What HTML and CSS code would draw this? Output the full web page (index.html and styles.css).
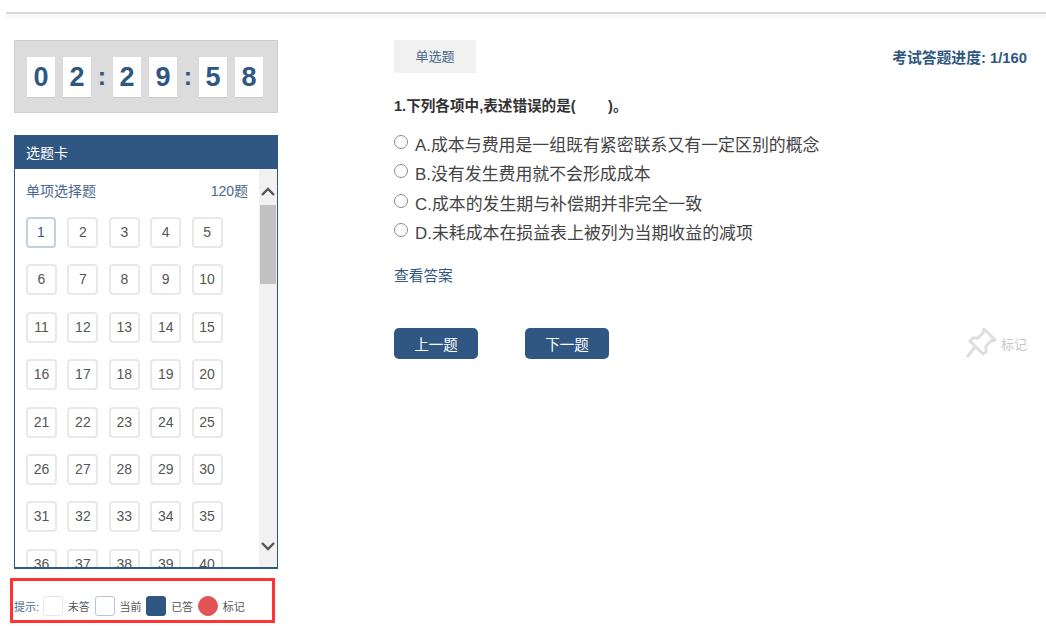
FILE: index.html
```html
<!DOCTYPE html>
<html lang="zh-CN">
<head>
    <meta charset="UTF-8">
    <meta name="viewport" content="width=device-width, initial-scale=1.0">
    <title>考试答题</title>
    <link rel="stylesheet" href="styles.css">
</head>
<body>
    <div class="topbar"></div>
    <div class="page">
        <div class="side">
            <div class="timer">
                <span class="digit">0</span><span class="digit">2</span><span class="colon">:</span>
                <span class="digit">2</span><span class="digit">9</span><span class="colon">:</span>
                <span class="digit">5</span><span class="digit">8</span>
            </div>

            <div class="card">
                <div class="card-title">选题卡</div>
                <div class="card-body">
                    <div class="card-list">
                        <div class="list-head"><span>单项选择题</span><span>120题</span></div>
                        <div class="cells">
                            <a class="cell current">1</a><a class="cell">2</a><a class="cell">3</a><a class="cell">4</a><a class="cell">5</a>
                            <a class="cell">6</a><a class="cell">7</a><a class="cell">8</a><a class="cell">9</a><a class="cell">10</a>
                            <a class="cell">11</a><a class="cell">12</a><a class="cell">13</a><a class="cell">14</a><a class="cell">15</a>
                            <a class="cell">16</a><a class="cell">17</a><a class="cell">18</a><a class="cell">19</a><a class="cell">20</a>
                            <a class="cell">21</a><a class="cell">22</a><a class="cell">23</a><a class="cell">24</a><a class="cell">25</a>
                            <a class="cell">26</a><a class="cell">27</a><a class="cell">28</a><a class="cell">29</a><a class="cell">30</a>
                            <a class="cell">31</a><a class="cell">32</a><a class="cell">33</a><a class="cell">34</a><a class="cell">35</a>
                            <a class="cell">36</a><a class="cell">37</a><a class="cell">38</a><a class="cell">39</a><a class="cell">40</a>
                        </div>
                    </div>
                    <div class="scrollbar">
                        <svg class="arrow" width="18" height="18" viewBox="0 0 18 18"><path d="M3 12 L9 6 L15 12" fill="none" stroke="#555" stroke-width="2.4"/></svg>
                        <div class="thumb"></div>
                        <div class="track"></div>
                        <svg class="arrow" width="18" height="18" viewBox="0 0 18 18"><path d="M3 6 L9 12 L15 6" fill="none" stroke="#555" stroke-width="2.4"/></svg>
                    </div>
                </div>
            </div>

            <div class="legend">
                <span class="legend-title">提示:</span>
                <span class="swatch"></span><span class="legend-text">未答</span>
                <span class="swatch now"></span><span class="legend-text">当前</span>
                <span class="swatch done"></span><span class="legend-text">已答</span>
                <span class="swatch mark"></span><span class="legend-text">标记</span>
            </div>
        </div>

        <div class="main">
            <div class="main-head">
                <span class="tag">单选题</span>
                <span class="progress">考试答题进度: 1/160</span>
            </div>
            <p class="question">1.下列各项中,表述错误的是(&nbsp;&nbsp;&nbsp;&nbsp;&nbsp;&nbsp;&nbsp;&nbsp;)。</p>
            <label class="option"><span class="radio"></span>A.成本与费用是一组既有紧密联系又有一定区别的概念</label>
            <label class="option"><span class="radio"></span>B.没有发生费用就不会形成成本</label>
            <label class="option"><span class="radio"></span>C.成本的发生期与补偿期并非完全一致</label>
            <label class="option"><span class="radio"></span>D.未耗成本在损益表上被列为当期收益的减项</label>
            <a class="answer">查看答案</a>
            <div class="actions">
                <button class="btn">上一题</button>
                <button class="btn">下一题</button>
                <span class="pin">
                    <svg width="32" height="32" viewBox="0 0 32 32"><path d="M19 2 L30 13 L26 14 L21 19 L21 25 L18 27 L5 14 L8 11 L13 11 L18 6 Z M10 20 L2 30" fill="none" stroke="#dedede" stroke-width="3" stroke-linejoin="round"/></svg>
                    标记
                </span>
            </div>
        </div>
    </div>
</body>
</html>
```

FILE: styles.css
```css
body {
    margin: 0;
    padding: 12px 0 0 6px;
    height: 642px;
    box-sizing: border-box;
    overflow: hidden;
    background-color: #fff;
    color: #444;
    font-family: "Liberation Sans", "Noto Sans CJK SC", sans-serif;
}
.topbar {
    height: 6px;
    border-top: 2px solid #d8d8d8;
    background-color: #f8f8f8;
    box-sizing: border-box;
}
.page {
    display: flex;
    padding: 22px 19px 0 8px;
}

/* left column */
.side {
    width: 264px;
    flex: none;
    position: relative;
}
.timer {
    height: 73px;
    box-sizing: border-box;
    display: flex;
    align-items: center;
    padding-left: 12px;
    background-color: #dcdcdc;
    border: 1px solid #cfcfcf;
}
.digit {
    width: 28px;
    height: 40px;
    margin: 0 4px 0 4px;
    background-color: #fff;
    box-shadow: 0 1px 1px #ccc;
    color: #2f5782;
    font-size: 27px;
    font-weight: bold;
    line-height: 40px;
    text-align: center;
}
.timer .digit:first-child { margin-left: 0; }
.colon {
    width: 10px;
    margin: 0 2px;
    color: #2f5782;
    font-size: 25px;
    font-weight: bold;
    text-align: center;
}
.card {
    margin-top: 22px;
    height: 434px;
    box-sizing: border-box;
    border: 1px solid #2f5782;
    border-bottom-width: 2px;
    display: flex;
    flex-direction: column;
}
.card-title {
    height: 33px;
    flex: none;
    padding-left: 11px;
    background-color: #2f5782;
    color: #fff;
    font-size: 14px;
    line-height: 34px;
}
.card-body {
    flex: 1;
    display: flex;
    min-height: 0;
}
.card-list {
    flex: 1;
    overflow: hidden;
    padding: 12px 11px 0 11px;
}
.list-head {
    display: flex;
    justify-content: space-between;
    color: #4a688c;
    font-size: 14px;
    line-height: 20px;
}
.cells {
    display: grid;
    grid-template-columns: repeat(5, 31px);
    column-gap: 10.4px;
    row-gap: 16.4px;
    margin-top: 16px;
}
.cell {
    height: 31px;
    box-sizing: border-box;
    border: 2px solid #e8e8e8;
    border-radius: 4px;
    color: #555;
    font-size: 14px;
    line-height: 27px;
    text-align: center;
}
.cell.current {
    width: 30px;
    border-color: #c3d0de;
    color: #2f5782;
}
.scrollbar {
    width: 18px;
    flex: none;
    display: flex;
    flex-direction: column;
    background-color: #f1f1f1;
}
.arrow { flex: none; display: block; margin-top: 14px; }
.scrollbar .arrow:last-child { margin: 0 0 12px; }
.thumb {
    height: 79px;
    flex: none;
    margin: 4px 1px 0 1px;
    background-color: #c1c1c1;
}
.track { flex: 1; }
.legend {
    position: absolute;
    left: -4px;
    top: 538px;
    width: 265px;
    height: 45px;
    box-sizing: border-box;
    border: 3px solid #f33;
    display: flex;
    align-items: center;
    padding: 11px 0 0 1px;
    font-size: 11px;
    color: #555;
}
.legend-title { color: #4a688c; margin-right: 4px; }
.legend-text { margin: 0 5px 0 4.7px; }
.swatch {
    width: 20px;
    height: 20px;
    box-sizing: border-box;
    border: 1px solid #e4e8ec;
    border-radius: 3px;
}
.swatch.now { border: 1px solid #b6c6d8; }
.swatch.done { background-color: #2f5782; border-color: #2f5782; }
.swatch.mark { background-color: #e25557; border-color: #e25557; border-radius: 50%; }

/* right column */
.main {
    flex: 1;
    margin-left: 116px;
}
.main-head {
    display: flex;
    justify-content: space-between;
    align-items: center;
}
.tag {
    width: 82px;
    height: 33px;
    background-color: #f1f1f1;
    color: #4a688c;
    font-size: 13px;
    line-height: 34px;
    text-align: center;
}
.progress {
    color: #2f5782;
    font-size: 14.8px;
    font-weight: bold;
}
.question {
    margin: 24px 0 14px;
    color: #333;
    font-size: 14.6px;
    font-weight: bold;
    line-height: 18px;
}
.option {
    display: flex;
    align-items: center;
    height: 29.3px;
    font-size: 16.9px;
    color: #444;
}
.radio {
    width: 12px;
    height: 12px;
    margin: -3px 7px 0 0;
    border: 1px solid #8a8a8a;
    border-radius: 50%;
    flex: none;
}
.answer {
    display: block;
    margin-top: 20px;
    color: #2f5782;
    font-size: 14.7px;
    line-height: 20px;
}
.actions {
    display: flex;
    align-items: center;
    margin-top: 41px;
}
.btn {
    width: 84px;
    height: 31px;
    margin-right: 47px;
    padding: 0;
    border: none;
    border-radius: 5px;
    background-color: #2f5782;
    color: #fff;
    font-family: inherit;
    font-size: 14.5px;
    cursor: pointer;
}
.pin {
    margin-left: auto;
    display: flex;
    align-items: center;
    color: #c8c8c8;
    font-size: 13px;
}
.pin svg { margin-right: 4px; }
```
